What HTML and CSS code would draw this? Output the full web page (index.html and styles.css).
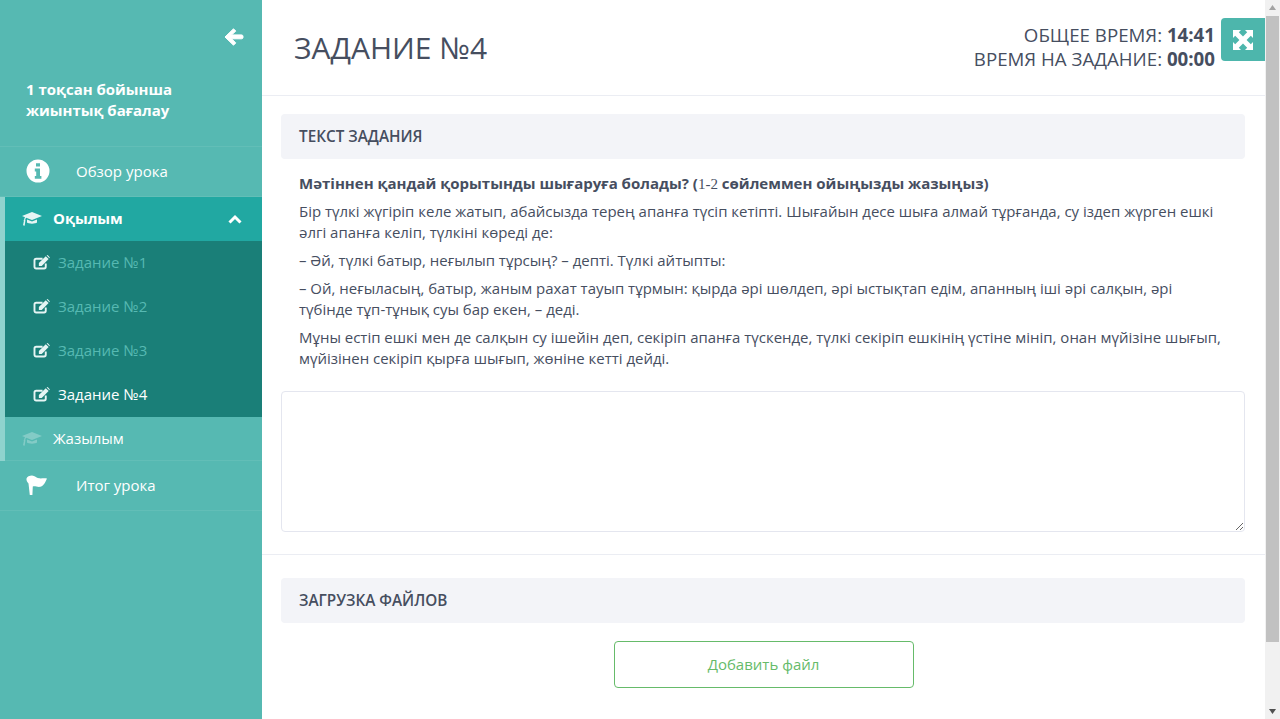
FILE: index.html
```html
<!DOCTYPE html>
<html lang="ru">
<head>
<meta charset="utf-8">
<title>Задание №4</title>
<link rel="stylesheet" href="styles.css">
</head>
<body>
<div class="app">
  <aside class="sidebar">
    <div class="side-top">
      <button class="back" aria-label="Назад">
        <svg viewBox="0 0 20 18" width="20" height="18"><path fill="#fff" stroke="#fff" stroke-width="1" stroke-linejoin="round" d="M9.500.8 1 9l8.500 8.200 2.300-2.300-4.200-4.100h10c.8 0 1.400-.6 1.400-1.300V8.200c0-.7-.6-1.300-1.400-1.300h-10l4.200-3.800z"/></svg>
      </button>
      <div class="course">1 тоқсан бойынша<br>жиынтық бағалау</div>
    </div>
    <nav>
      <a class="item top-item">
        <svg class="i-main" viewBox="0 0 24 24" width="24" height="24"><path fill="#fff" fill-rule="evenodd" d="M12 .5a11.500 11.500 0 1 0 0 23 11.500 11.500 0 0 0 0-23zM10 4.200h4v3.400h-4zM8.800 9.600H14v7.400h1.400v2.800H8.800V17h1.400v-4.600H8.800z"/></svg>
        <span>Обзор урока</span>
      </a>
      <div class="section open">
        <a class="sec-head active">
          <svg class="cap" viewBox="0 0 20 15" width="20" height="15"><path fill="currentColor" d="M10 1 0 5l3 1.200c-.5.8-.8 1.700-.9 2.700-.5.2-.6.9-.2 1.200L1 14.200l1.700.6.6-4.600c.3-.3.3-.9-.1-1.100.1-.9.4-1.700 1-2.300L10 9l10-4zM5 8.500v3c1.200 1.500 8.800 1.500 10 0v-3L10 10.500z"/></svg>
          <span class="sec-title">Оқылым</span>
          <svg class="chev" viewBox="0 0 14 10" width="14" height="10"><path fill="none" stroke="#fff" stroke-width="3" d="m1.500 8.500 5.500-5.500 5.500 5.500"/></svg>
        </a>
        <div class="subs">
          <a class="sub"><svg class="edit" viewBox="0 0 16 14" width="17" height="15"><use href="#edit"/></svg>Задание №1</a>
          <a class="sub"><svg class="edit" viewBox="0 0 16 14" width="17" height="15"><use href="#edit"/></svg>Задание №2</a>
          <a class="sub"><svg class="edit" viewBox="0 0 16 14" width="17" height="15"><use href="#edit"/></svg>Задание №3</a>
          <a class="sub current"><svg class="edit" viewBox="0 0 16 14" width="17" height="15"><use href="#edit"/></svg>Задание №4</a>
        </div>
        <a class="sec-head plain">
          <svg class="cap faded" viewBox="0 0 20 15" width="20" height="15"><path fill="currentColor" d="M10 1 0 5l3 1.200c-.5.8-.8 1.700-.9 2.700-.5.2-.6.9-.2 1.200L1 14.200l1.700.6.6-4.600c.3-.3.3-.9-.1-1.100.1-.9.4-1.700 1-2.300L10 9l10-4zM5 8.500v3c1.200 1.500 8.800 1.500 10 0v-3L10 10.500z"/></svg>
          <span class="sec-title">Жазылым</span>
        </a>
      </div>
      <a class="item top-item last">
        <svg class="i-main" viewBox="0 0 22 20" width="22" height="20"><path fill="#fff" d="M.5 3.500C1 1.500 3.500.5 6 .5c3 0 4 2.500 7 2.800 2.500.3 5-.3 8 .2-1.500 3-3 7.500-6.500 8.300-3 .6-5.500-1-7.700-.3L6.400 20H3.800L2.500 8.500C1 7 .2 5 .5 3.500z"/></svg>
        <span>Итог урока</span>
      </a>
    </nav>
  </aside>
  <main class="main">
    <header class="head">
      <h1>ЗАДАНИЕ №4</h1>
      <div class="timers">
        <div>ОБЩЕЕ ВРЕМЯ: <b>14:41</b></div>
        <div>ВРЕМЯ НА ЗАДАНИЕ: <b>00:00</b></div>
      </div>
      <button class="expand" aria-label="На весь экран">
        <svg viewBox="0 0 20 20" width="20" height="20"><path fill="#fff" d="M0 0h8L5.800 2.200 10 6.400l4.200-4.200L12 0h8v8l-2.200-2.200L13.600 10l4.200 4.200L20 12v8h-8l2.200-2.200L10 13.600l-4.200 4.200L8 20H0v-8l2.200 2.200L6.400 10 2.200 5.800 0 8z"/></svg>
      </button>
    </header>
    <section class="task">
      <h2 class="panel">ТЕКСТ ЗАДАНИЯ</h2>
      <div class="text">
        <p class="question"><b>Мәтіннен қандай қорытынды шығаруға болады? (<span class="serif">1-2</span> сөйлеммен ойыңызды жазыңыз)</b></p>
        <p>Бір түлкі жүгіріп келе жатып, абайсызда терең апанға түсіп кетіпті. Шығайын десе шыға алмай тұрғанда, су іздеп жүрген ешкі әлгі апанға келіп, түлкіні көреді де:</p>
        <p>– Әй, түлкі батыр, неғылып тұрсың? – депті. Түлкі айтыпты:</p>
        <p>– Ой, неғыласың, батыр, жаным рахат тауып тұрмын: қырда әрі шөлдеп, әрі ыстықтап едім, апанның іші әрі салқын, әрі түбінде тұп-тұнық суы бар екен, – деді.</p>
        <p>Мұны естіп ешкі мен де салқын су ішейін деп, секіріп апанға түскенде, түлкі секіріп ешкінің үстіне мініп, онан мүйізіне шығып, мүйізінен секіріп қырға шығып, жөніне кетті дейді.</p>
      </div>
      <textarea class="answer"></textarea>
    </section>
    <section class="files">
      <h2 class="panel">ЗАГРУЗКА ФАЙЛОВ</h2>
      <div class="add-wrap"><button class="add">Добавить файл</button></div>
    </section>
  </main>
  <div class="scrollbar" aria-hidden="true">
    <svg class="arrow" viewBox="0 0 15 15" width="15" height="15"><path fill="#a3a3a3" d="M7.500 5 11 10H4z"/></svg>
    <div class="thumb"></div>
    <div class="track"></div>
    <svg class="arrow" viewBox="0 0 15 15" width="15" height="15"><path fill="#505050" d="M7.500 10 11 5H4z"/></svg>
  </div>
</div>
<svg class="defs" width="0" height="0"><defs><g id="edit"><path fill="none" stroke="currentColor" stroke-width="1.800" d="M12 8v3c0 1-.6 1.600-1.600 1.600H3c-1 0-1.600-.6-1.600-1.600V5c0-1 .6-1.600 1.600-1.600h6"/><path fill="currentColor" d="M5.500 7.500 12 1l2.700 2.700L8.200 10.200H5.500z"/><path fill="currentColor" d="m12.800.3.6-.3c.3 0 2.400 2 2.400 2.400l-.4.6z"/></g></defs></svg>
</body>
</html>
```
FILE: styles.css
```css
* { box-sizing: border-box; }
html, body { margin: 0; height: 100%; overflow: hidden; }
body { font-family: "Open Sans", "Noto Sans", sans-serif; color: #464e5f; background: #fff; }
.app { display: flex; height: 719px; }
.defs { position: absolute; }

.sidebar { width: 262px; flex: none; background: #56b9b2; color: #fff; display: flex; flex-direction: column; }
.side-top { height: 147px; border-bottom: 1px solid #62beb7; padding: 27px 18px 0 26px; }
.back { display: block; margin-left: auto; padding: 0; background: none; border: 0; height: 22px; }
.course { margin-top: 30px; font-size: 14.970px; line-height: 21px; font-weight: 700; }
.item { display: flex; align-items: center; height: 50px; padding: 0 0 2px 26px; border-bottom: 1px solid #62beb7; font-size: 15px; }
.item span { margin-left: 26px; }
.item.last .i-main { margin-right: 2px; }
.i-main { flex: none; }
.section { border-left: 5px solid #8fd3ce; }
.sec-head { display: flex; align-items: center; height: 44px; padding-left: 17px; padding-bottom: 1px; font-size: 15px; border-bottom: 1px solid #62beb7; }
.sec-head.active { background: #21a8a2; border-bottom: 0; font-weight: 700; padding-bottom: 2px; }
.sec-title { margin-left: 11px; }
.chev { margin: 2px 20px 0 auto; }
.cap { color: #e6f5f4; }
.cap.faded { color: #83cbc6; }
.subs { background: #1a7f78; height: 176px; display: flex; flex-direction: column; }
.sub { display: flex; align-items: center; height: 44px; padding: 0 0 2px 28px; color: #56b9b2; font-size: 15px; }
.sub .edit { color: #e6f5f4; margin-right: 8px; }
.sub.current { color: #fff; }

.main { flex: 1; min-width: 0; height: 719px; overflow: hidden; }
.head { display: flex; align-items: flex-start; height: 96px; border-bottom: 1px solid #ebedf3; padding: 18px 0 0 32px; }
h1 { margin: 11px auto 0 0; font-size: 30px; line-height: 38px; font-weight: 400; color: #464e5f; }
.timers { text-align: right; font-size: 18.700px; line-height: 24px; margin: 5px 6px 0 0; }
.timers b { font-weight: 700; }
.expand { width: 44px; height: 43px; padding: 0; background: #4db6ac; border: 0; border-radius: 4px 0 0 4px; display: flex; align-items: center; justify-content: center; }

.task { padding: 18px 20px 22px 19px; border-bottom: 1px solid #ebedf3; }
.panel { margin: 0; height: 45px; padding: 0 18px 2px; display: flex; align-items: center; background: #f3f4f8; border-radius: 4px; font-size: 15.300px; font-weight: 650; color: #464e5f; }
.text { padding: 14px 18px 0; font-size: 14.970px; line-height: 21px; }
.text p { margin: 0 0 7px; }
.text .question { margin-bottom: 6px; font-size: 15.030px; }
.serif { font-family: "Liberation Serif", serif; font-weight: 400; }
.answer { display: block; width: 100%; height: 141px; margin-top: 22px; border: 1px solid #e4e6ef; border-radius: 4px; resize: vertical; outline: 0; background: #fff; }

.files { padding: 23px 20px 31px 19px; }
.add-wrap { display: flex; justify-content: center; padding: 18px 0 0 1px; }
.add { width: 300px; height: 47px; padding: 0 0 2px; background: #fff; border: 1px solid #66bb6a; border-radius: 4px; color: #66bb6a; font: 400 15px "Open Sans", sans-serif; }

.scrollbar { width: 15px; flex: none; background: #f1f1f1; display: flex; flex-direction: column; height: 719px; }
.arrow { flex: none; display: block; }
.thumb { height: 626px; margin: 1px 1px 0; background: #c1c1c1; flex: none; }
.track { flex: 1; }
```
